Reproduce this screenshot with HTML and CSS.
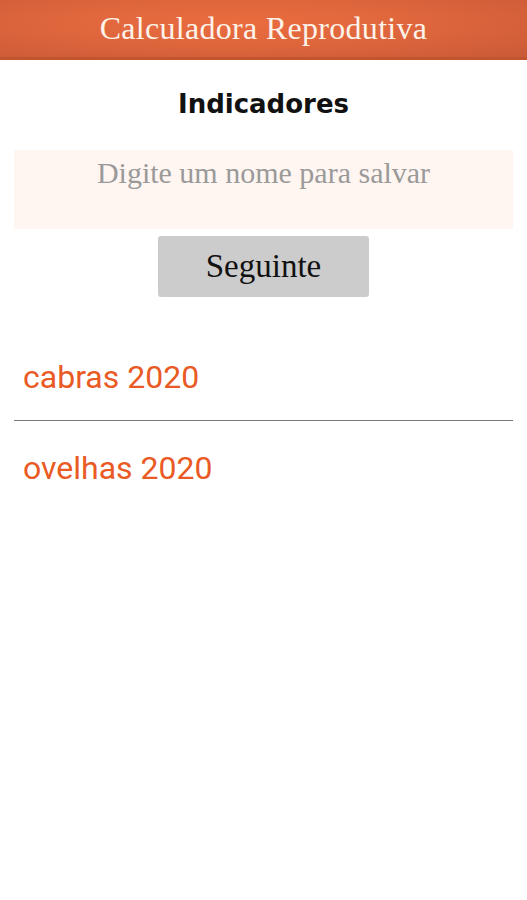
FILE: index.html
```html
<!DOCTYPE html>
<html lang="pt">

<head>
    <meta charset="UTF-8">
    <meta name="viewport" content="width=device-width, initial-scale=1.0">
    <title>Calculadora Reprodutiva</title>
    <link rel="stylesheet" href="styles.css">
</head>

<body>
    <header>
        <h1>Calculadora Reprodutiva</h1>
    </header>

    <main>
        <h2>Indicadores</h2>
        <textarea class="nome-input" placeholder="Digite um nome para salvar"></textarea>
        <button type="button">Seguinte</button>

        <ul class="lista">
            <li>cabras 2020</li>
            <li>ovelhas 2020</li>
        </ul>
    </main>
</body>

</html>
```

FILE: styles.css
```css
body {
    font-family: 'Liberation Serif', serif;
    margin: 0;
    padding: 0;
    background-color: #fff;
}

header {
    height: 57px;
    background: radial-gradient(ellipse at 45% 40%, #ea6c3f 0%, #df663c 45%, #c95a37 100%);
    border-bottom: 3px solid #c0552f;
    display: flex;
    align-items: center;
    justify-content: center;
}

header h1 {
    margin: 0;
    color: #fdf3ea;
    font-weight: normal;
    font-size: 32px;
    letter-spacing: 0.3px;
}

main {
    display: flex;
    flex-direction: column;
    align-items: center;
    padding: 0 14px;
}

h2 {
    margin: 27px 0 0;
    font-family: 'DejaVu Sans', sans-serif;
    font-size: 26px;
    line-height: 34px;
    color: #111;
}

.nome-input {
    box-sizing: border-box;
    width: 100%;
    height: 79px;
    margin-top: 29px;
    padding: 6px 10px;
    border: none;
    resize: none;
    background-color: #fff5f1;
    font-family: 'Liberation Serif', serif;
    font-size: 30px;
    text-align: center;
}

.nome-input::placeholder {
    color: #9a9a9a;
}

button {
    margin-top: 7px;
    width: 211px;
    height: 61px;
    padding: 0;
    background-color: #cccccc;
    color: #111;
    border: none;
    border-radius: 3px;
    font-family: 'Liberation Serif', serif;
    font-size: 33px;
}

.lista {
    list-style: none;
    width: 100%;
    margin: 51px 0 0;
    padding: 0;
}

.lista li {
    font-family: Roboto, sans-serif;
    font-size: 32px;
    color: #e95a24;
    padding: 10px 9px 24px;
}

.lista li + li {
    border-top: 1px solid #777;
    padding-top: 28px;
}
```
